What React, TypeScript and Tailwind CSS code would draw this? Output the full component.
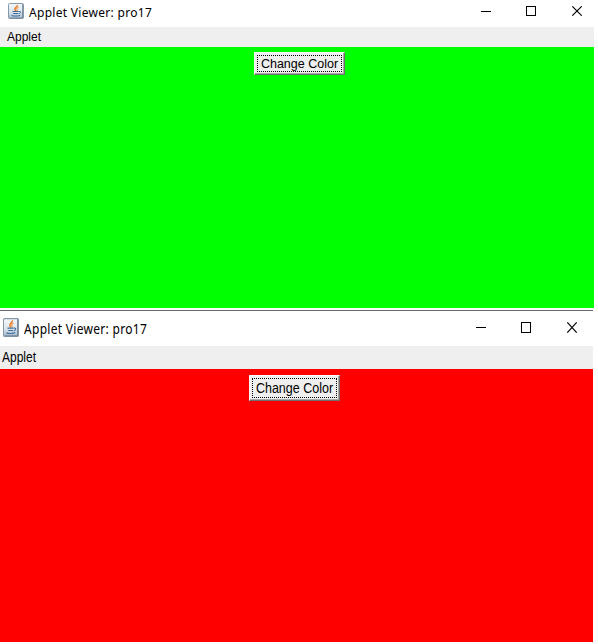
import React from 'react';

function JavaIcon({ className }: { className: string }) {
  return (
    <svg className={className} viewBox="0 0 16 16" preserveAspectRatio="none" fill="none">
      <defs>
        <linearGradient id="tile" x1="0" y1="0" x2="0" y2="1">
          <stop offset="0" stopColor="#f4f7fa" />
          <stop offset="0.55" stopColor="#dde6ee" />
          <stop offset="1" stopColor="#a3bace" />
        </linearGradient>
      </defs>
      <rect x="0.5" y="0.5" width="15" height="15" rx="1" fill="url(#tile)" stroke="#8798a9" />
      <path d="M14.5 1v14H1.5" stroke="#6a8096" strokeWidth="0.8" />
      <path d="M9.3 2c.7 2-3.2 2.6-2.4 4.3.2.6.7 1 .9 1.7" stroke="#e8731c" strokeWidth="1.4" />
      <path d="M10.5 4.3c-1.8.8-2.2 1.5-1.4 2.4.3.5 0 .9-.3 1.3" stroke="#f09a4c" strokeWidth="1.1" />
      <path d="M4.5 8.5h6.2M5.2 10.5h4.8" stroke="#416e9b" strokeWidth="1" />
      <path d="M11 8.5c2.4-.4 2.2 1.6-.3 2.2M3.4 12.4c1 .9 7.4.9 8.8-.1" stroke="#416e9b" strokeWidth="1" />
    </svg>
  );
}

function WindowControls({ tall = false }: { tall?: boolean }) {
  return (
    <svg
      className={tall ? 'ml-auto mr-[15px] mt-[11px] h-[11px] w-[102px] shrink-0' : 'ml-auto mr-[12px] mt-[6px] h-[10px] w-[101px] shrink-0'}
      viewBox={tall ? '0 0 102 11' : '0 0 101 10'}
      fill="none"
      stroke="#000"
    >
      <path d="M0 5.5h10" />
      {tall ? <rect x="45.5" y=".5" width="9" height="10" /> : <rect x="45.5" y=".5" width="9" height="9" />}
      {tall ? <path d="M91.3.3l9.4 10.4M100.7.3l-9.4 10.4" strokeWidth="1.1" /> : <path d="M91.3.3l9.4 9.4M100.7.3l-9.4 9.4" strokeWidth="1.1" />}
    </svg>
  );
}

export default function App() {
  return (
    <main className="h-[644px] w-[598px] overflow-hidden bg-white font-['Liberation_Sans',Arial,sans-serif] text-black">
      <section className="flex h-[308px] w-[594px] flex-col">
        <header className="flex h-[27px] shrink-0 items-start pl-2">
          <JavaIcon className="mt-[3px] h-4 w-4 shrink-0" />
          <span className="ml-[5px] mt-[4px] whitespace-nowrap font-['Noto_Sans',sans-serif] text-[12px] leading-[17px] tracking-[0.3px]">Applet Viewer: pro17</span>
          <WindowControls />
        </header>
        <nav className="h-5 shrink-0 bg-[#efefef] pl-[7px] text-[12px] leading-5">Applet</nav>
        <div className="flex grow items-start justify-center bg-[#00ff00] pl-[5px] pt-[5px]">
          <button className="h-[23px] w-[91px] border border-[#f8f8f8] border-b-[#707070] border-r-[#707070] bg-[#efefef] p-[2px] shadow-[inset_-1px_-1px_0_#a8a8a8]">
            <span className="flex h-full items-center justify-center whitespace-nowrap border border-dotted border-black pt-px text-[12.5px] leading-none">Change Color</span>
          </button>
        </div>
      </section>
      <section className="mt-[2px] flex h-[332px] w-[593px] flex-col border-t border-[#68686c]">
        <header className="flex h-[35px] shrink-0 items-start pl-[3px]">
          <JavaIcon className="mt-[7px] h-[19px] w-4 shrink-0" />
          <span className="ml-[5px] mt-[9px] origin-center scale-y-[1.18] whitespace-nowrap font-['Noto_Sans',sans-serif] text-[12px] leading-[17px] tracking-[0.3px]">Applet Viewer: pro17</span>
          <WindowControls tall />
        </header>
        <nav className="flex h-[23px] shrink-0 items-center bg-[#efefef] pb-px pl-[2px] text-[12px]">
          <span className="scale-y-[1.17]">Applet</span>
        </nav>
        <div className="flex grow items-start justify-center bg-[#ff0000] pr-[4px] pt-[6px]">
          <button className="h-[26px] w-[91px] border border-[#f8f8f8] border-b-[#707070] border-r-[#707070] bg-[#efefef] p-[2px] shadow-[inset_-1px_-1px_0_#a8a8a8]">
            <span className="flex h-full items-center justify-center whitespace-nowrap border border-dotted border-black pt-[2px] text-[12.5px] leading-none">
              <span className="scale-y-[1.12]">Change Color</span>
            </span>
          </button>
        </div>
      </section>
    </main>
  );
}
